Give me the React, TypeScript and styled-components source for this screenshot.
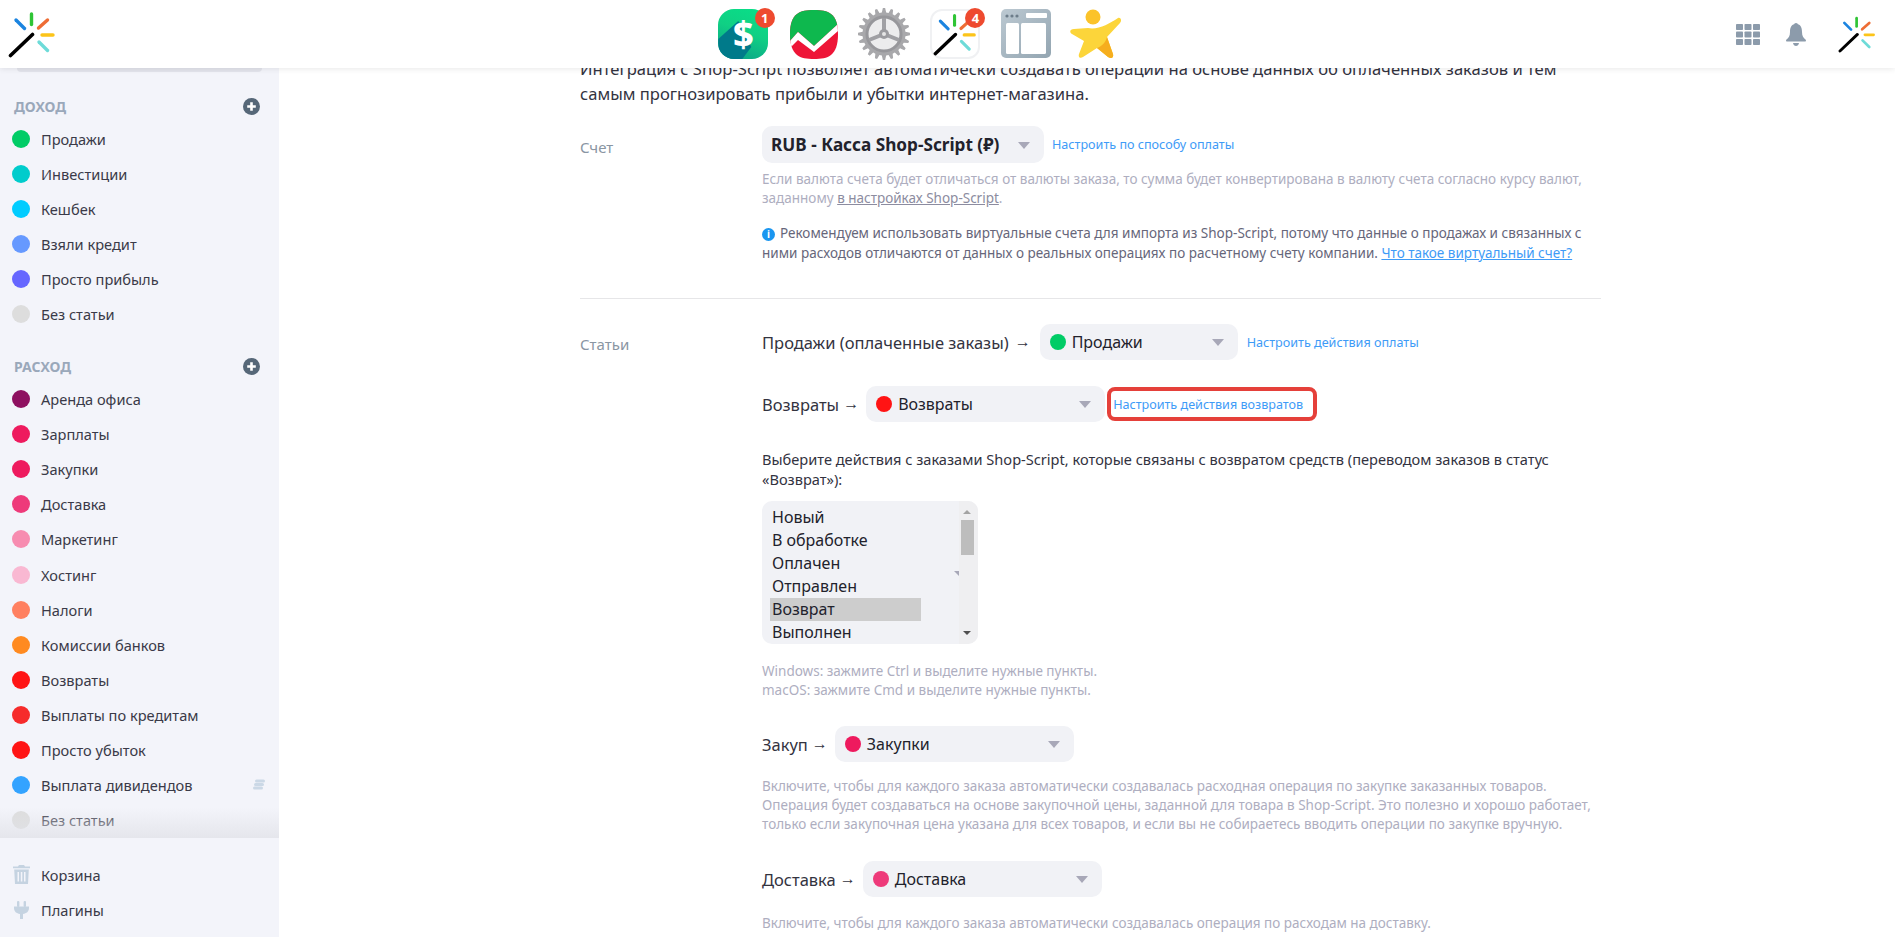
import React from 'react';
import styled, { createGlobalStyle } from 'styled-components';

const FONT = `'Noto Sans', 'Open Sans', sans-serif`;

const GlobalStyle = createGlobalStyle`
  html, body {
    margin: 0;
    height: 100%;
    overflow: hidden;
    background: #fff;
    font-family: ${FONT};
    color: #2e2e3a;
  }
  * { box-sizing: border-box; }
`;

const Page = styled.div`
  width: 1895px;
  height: 937px;
  display: flex;
  flex-direction: column;
  overflow: hidden;
`;

const Header = styled.header`
  position: relative;
  z-index: 5;
  flex: none;
  height: 68px;
  display: flex;
  align-items: center;
  padding: 0 19px 0 8px;
  background: #fff;
  box-shadow: 0 1px 6px rgba(0, 0, 0, 0.09);
`;

const AppDock = styled.nav`
  display: flex;
  align-items: center;
  margin-left: 652px;
`;

const AppCell = styled.div`
  position: relative;
  width: 70.6px;
  height: 52px;
  display: flex;
  align-items: center;
  justify-content: center;
`;

const Badge = styled.span<{ $right: number }>`
  position: absolute;
  top: 0;
  right: ${(p) => p.$right}px;
  width: 20px;
  height: 20px;
  border-radius: 50%;
  background: #ee4a2f;
  color: #fff;
  font-size: 13px;
  font-weight: 700;
  line-height: 20px;
  text-align: center;
`;

const DollarIcon = styled.div`
  position: relative;
  width: 50px;
  height: 50px;
  display: flex;
  align-items: center;
  justify-content: center;
  border-radius: 16px;
  overflow: hidden;
  background: linear-gradient(200deg, #08e088 0%, #10d084 45%, #0a9c88 100%);

  &::before {
    content: '';
    position: absolute;
    inset: 0;
    background: #007a8a;
    clip-path: polygon(0 60%, 40% 24%, 66% 76%, 48% 100%, 0 100%);
  }
`;

const DollarSign = styled.span`
  position: relative;
  color: #fff;
  font-size: 36px;
  font-weight: 800;
  line-height: 1;
`;

const WandTile = styled.div`
  width: 50px;
  height: 50px;
  border-radius: 12px;
  border: 2px solid #f0f1f3;
  background: #fff;
  display: flex;
  align-items: center;
  justify-content: center;
`;

const HeaderTools = styled.div`
  margin-left: auto;
  display: flex;
  align-items: center;
`;

const ToolSlot = styled.span<{ $gap: number }>`
  display: flex;
  margin-right: ${(p) => p.$gap}px;
`;

const Body = styled.div`
  flex: 1;
  min-height: 0;
  display: flex;
`;

const Sidebar = styled.aside`
  flex: none;
  width: 279px;
  display: flex;
  flex-direction: column;
  background: #f3f4fa;
`;

const SidebarScroll = styled.div`
  position: relative;
  height: 770px;
  overflow: hidden;

  &::after {
    content: '';
    position: absolute;
    left: 0;
    right: 0;
    bottom: 0;
    height: 30px;
    background: linear-gradient(rgba(225, 226, 232, 0), rgba(225, 226, 232, 0.8));
  }
`;

const SearchStub = styled.div`
  height: 4px;
  margin: 0 17px;
  border-radius: 0 0 10px 10px;
  background: #e3e4ec;
`;

const GroupTitle = styled.div`
  height: 24px;
  margin-bottom: 3px;
  display: flex;
  align-items: center;
  justify-content: space-between;
  padding: 0 19px 0 14px;
  font-size: 14px;
  font-weight: 700;
  color: #9aa8ba;
  text-transform: uppercase;
`;

const Group = styled.section<{ $top: number }>`
  margin-top: ${(p) => p.$top}px;
`;

const Row = styled.div`
  position: relative;
  height: 35.1px;
  display: flex;
  align-items: center;
  gap: 11px;
  padding-left: 12px;
  font-size: 14.6px;
  color: #3a3a48;
`;

const Dot = styled.span<{ $color: string; $size?: number }>`
  flex: none;
  width: ${(p) => p.$size ?? 18}px;
  height: ${(p) => p.$size ?? 18}px;
  border-radius: 50%;
  background: ${(p) => p.$color};
`;

const RowIcon = styled.span`
  flex: none;
  width: 18px;
  display: flex;
  justify-content: center;
`;

const CoinsMark = styled.svg`
  margin-left: auto;
  margin-right: 14px;
`;

const SidebarFooter = styled.div`
  padding-top: 19px;
`;

const Main = styled.main`
  flex: 1;
  min-width: 0;
  overflow: hidden;
  padding-left: 301px;
`;

const Content = styled.div`
  width: 1021px;
  margin-top: -12px;
`;

const Intro = styled.p`
  margin: 0;
  font-size: 16.6px;
  line-height: 25px;
  color: #33333f;
  white-space: nowrap;
`;

const FieldRow = styled.div<{ $top: number }>`
  display: grid;
  grid-template-columns: 182px 1fr;
  margin-top: ${(p) => p.$top}px;
`;

const FieldLabel = styled.div<{ $top: number }>`
  padding-top: ${(p) => p.$top}px;
  font-size: 15px;
  line-height: 20px;
  color: #8a96a3;
`;

const Divider = styled.hr`
  margin: 0;
  border: 0;
  border-top: 1px solid #e6e6e8;
`;

const Line = styled.div<{ $top?: number; $gap?: number }>`
  display: flex;
  align-items: center;
  gap: ${(p) => p.$gap ?? 7}px;
  margin-top: ${(p) => p.$top ?? 0}px;
  font-size: 16.5px;
  color: #33333f;
`;

const Arrow = styled.span`
  margin-left: -3px;
  font-family: 'Liberation Sans', sans-serif;
  font-size: 16px;
`;

const Select = styled.div<{ $width: number; $bold?: boolean; $height?: number }>`
  flex: none;
  position: relative;
  width: ${(p) => p.$width}px;
  height: ${(p) => p.$height ?? 36}px;
  display: flex;
  align-items: center;
  gap: 6px;
  padding-left: ${(p) => (p.$bold ? 9 : 10)}px;
  border-radius: 10px;
  background: #f1f2f6;
  font-size: ${(p) => (p.$bold ? 17.2 : 16)}px;
  font-weight: ${(p) => (p.$bold ? 700 : 400)};
  color: #22222c;
  white-space: nowrap;

  &::after {
    content: '';
    position: absolute;
    right: 14px;
    top: 50%;
    margin-top: -3px;
    border-style: solid;
    border-width: 7px 6px 0;
    border-color: #a8a8b8 transparent transparent;
  }
`;

const ActionLink = styled.a`
  font-size: 12.6px;
  color: #3e9bf7;
  white-space: nowrap;
`;

const BoxedLink = styled(ActionLink)`
  height: 34px;
  margin-left: -5px;
  padding: 0 10px 0 2px;
  display: flex;
  align-items: center;
  border: 4px solid #e5403a;
  border-radius: 8px;
`;

const Hint = styled.p<{ $top: number }>`
  margin: ${(p) => p.$top}px 0 0;
  font-size: 13.5px;
  line-height: 19px;
  color: #aeaebf;
  white-space: nowrap;

  a {
    color: #8c8ca0;
    text-decoration: underline;
  }
`;

const Notice = styled.p`
  margin: 15px 0 0;
  font-size: 13.5px;
  line-height: 20px;
  color: #66667a;
  white-space: nowrap;

  a {
    color: #3e9bf7;
    text-decoration: underline;
  }
`;

const InfoBadge = styled.span`
  display: inline-block;
  width: 13px;
  height: 13px;
  margin-right: 5px;
  border-radius: 50%;
  background: #1a96f0;
  color: #fff;
  font-size: 10px;
  font-weight: 700;
  line-height: 13px;
  text-align: center;
`;

const Lead = styled.p`
  margin: 27px 0 0;
  font-size: 14.6px;
  line-height: 20px;
  color: #33333f;
  white-space: nowrap;
`;

const ListBox = styled.div`
  position: relative;
  width: 216px;
  height: 143px;
  margin-top: 12px;
  padding: 5px 0 0 8px;
  border-radius: 10px;
  background: #f1f2f6;
  overflow: hidden;

  &::before {
    content: '';
    position: absolute;
    left: 192px;
    top: 70px;
    border-top: 5px solid #a8a8b8;
    border-left: 5px solid transparent;
  }
`;

const ListOption = styled.div<{ $selected?: boolean }>`
  width: 151px;
  height: 23px;
  padding-left: 2px;
  font-size: 16px;
  line-height: 23px;
  color: #22222c;
  background: ${(p) => (p.$selected ? '#cdcdcd' : 'transparent')};
`;

const ListScrollbar = styled.div`
  position: absolute;
  top: 0;
  right: 0;
  bottom: 0;
  width: 19px;
  background: #efeff1;

  &::before,
  &::after {
    content: '';
    position: absolute;
    left: 4px;
    border-style: solid;
    border-color: transparent;
  }

  &::before {
    top: 9px;
    border-width: 0 4px 4px;
    border-bottom-color: #a3a3a3;
  }

  &::after {
    bottom: 9px;
    border-width: 4px 4px 0;
    border-top-color: #505050;
  }
`;

const ListThumb = styled.div`
  position: absolute;
  top: 19px;
  left: 2px;
  width: 13px;
  height: 35px;
  background: #bdbdbd;
`;

const Wand: React.FC<{ size: number }> = ({ size }) => (
  <svg width={size} height={size} viewBox="8 9 48 48" fill="none" strokeLinecap="round">
    <path d="M10.5 54.5 32.5 33.5" stroke="#000" strokeWidth="3.6" />
    <path d="M16 19 24.5 27.5" stroke="#1b84e0" strokeWidth="3.4" />
    <path d="M31.5 13V23.5" stroke="#2fc435" strokeWidth="3.4" />
    <path d="M38.5 27 47.5 19" stroke="#ee6d35" strokeWidth="3.4" />
    <path d="M42 34H53" stroke="#fcc419" strokeWidth="3.4" />
    <path d="M39 41 47.5 49.5" stroke="#6ddbd8" strokeWidth="3.4" />
  </svg>
);

// gear outline: 20 teeth around the wheel
const gearPath = (() => {
  const teeth = 20;
  const points: string[] = [];
  for (let i = 0; i < teeth; i++) {
    const step = (Math.PI * 2) / teeth;
    const a = i * step;
    const corners: [number, number][] = [
      [-0.32, 21.5],
      [-0.14, 26],
      [0.14, 26],
      [0.32, 21.5],
    ];
    for (const [off, r] of corners) {
      const angle = a + off * step;
      points.push(`${(26 + r * Math.cos(angle)).toFixed(2)} ${(26 + r * Math.sin(angle)).toFixed(2)}`);
    }
  }
  return `M${points.join('L')}Z`;
})();

const TrendIcon = () => (
  <svg width="48" height="49" viewBox="0 0 48 49">
    <defs>
      <clipPath id="trendClip">
        <path d="M24 0C38 0 48 3 48 24C48 46 38 49 24 49C10 49 0 46 0 24C0 3 10 0 24 0Z" />
      </clipPath>
    </defs>
    <g clipPath="url(#trendClip)">
      <rect width="48" height="49" fill="#ee1537" />
      <path d="M0 0H48V14L24 36 8 22 0 31Z" fill="#0eb84e" />
      <path d="M0 31 8 22 24 36 48 14V21L24 42 8 30 0 38Z" fill="#fff" />
    </g>
  </svg>
);

const GearIcon = () => (
  <svg width="52" height="52" viewBox="0 0 52 52">
    <path d={gearPath} fill="#a8a8ab" />
    <circle cx="26" cy="26" r="17" fill="#ececed" />
    <circle cx="26" cy="26" r="17" fill="none" stroke="#97979b" strokeWidth="3" />
    <path d="M26 26V10M26 26 11 32M26 26 41 32" stroke="#a0a0a4" strokeWidth="4" />
    <circle cx="26" cy="26" r="5" fill="#9b9b9f" />
    <circle cx="26" cy="26" r="2" fill="#e6e6e6" />
  </svg>
);

const WindowIcon = () => (
  <svg width="50" height="50" viewBox="0 0 50 50">
    <defs>
      <linearGradient id="windowShade" x1="0" y1="0" x2="1" y2="1">
        <stop offset="0" stopColor="#bcc9d2" />
        <stop offset="1" stopColor="#93a5b1" />
      </linearGradient>
    </defs>
    <rect width="50" height="49" rx="5" fill="url(#windowShade)" />
    <circle cx="6" cy="7" r="1.6" fill="#6d7d8a" />
    <circle cx="11" cy="7" r="1.6" fill="#6d7d8a" />
    <circle cx="16" cy="7" r="1.6" fill="#6d7d8a" />
    <rect x="25" y="4" width="21" height="5" rx="1" fill="#fff" />
    <rect x="5" y="14" width="13" height="31" rx="1.5" fill="#fff" />
    <rect x="20" y="14" width="25" height="31" rx="1.5" fill="#fff" />
  </svg>
);

const StarIcon = () => (
  <svg width="52" height="52" viewBox="0 0 52 52">
    <circle cx="23" cy="9" r="7.5" fill="#fbc32a" />
    <path d="M48 10C51 9 52 13 50 15L37 29 43 46C44 50 41 51 38 49L27 40 13 49C10 51 8 49 9 46L14 33 2 26C-1 24 0 21 4 21L18 20C28 22 39 16 48 10Z" fill="#fcd53a" />
    <path d="M37 29 43 46C44 50 41 51 38 49L27 40C32 38 36 34 37 29Z" fill="#f6ae1e" />
  </svg>
);

const GridIcon = () => (
  <svg width="24" height="21" viewBox="0 0 24 21" fill="#8c9bab">
    {[0, 1, 2].flatMap((r) =>
      [0, 1, 2].map((c) => <rect key={`${r}-${c}`} x={c * 8.5} y={r * 7.5} width="7" height="6" rx="0.8" />),
    )}
  </svg>
);

const BellIcon = () => (
  <svg width="20" height="23" viewBox="0 0 20 23" fill="#8c9bab">
    <circle cx="10" cy="2" r="2" />
    <path d="M10 1C14.5 1 16 4.5 16 9C16 13 17.5 15 19.5 16.5C20.3 17.2 20 18.5 19 18.5H1C0 18.5 -0.3 17.2 0.5 16.5C2.5 15 4 13 4 9C4 4.5 5.5 1 10 1Z" />
    <path d="M7 20H13C12.7 22 11.4 23 10 23C8.6 23 7.3 22 7 20Z" />
  </svg>
);

const TrashIcon = () => (
  <svg width="17" height="19" viewBox="0 0 17 19" fill="#c5d3e1">
    <path d="M6 0H11L12 1.5H17V3.2H0V1.5H5Z" />
    <path d="M1.2 4.5H15.8L15 19H2ZM4.5 7V16.5H6V7ZM7.8 7V16.5H9.3V7ZM11 7V16.5H12.5V7Z" fillRule="evenodd" />
  </svg>
);

const PlugIcon = () => (
  <svg width="15" height="18" viewBox="0 0 15 18" fill="#c5d3e1">
    <rect x="3" y="0" width="2.4" height="6" rx="1" />
    <rect x="9.6" y="0" width="2.4" height="6" rx="1" />
    <path d="M0 5.5H15V7C15 10.5 12.5 12.5 9 13V18H6V13C2.5 12.5 0 10.5 0 7Z" />
  </svg>
);

const incomeRows = [
  ['Продажи', '#00cc66'],
  ['Инвестиции', '#00cccc'],
  ['Кешбек', '#00ccff'],
  ['Взяли кредит', '#6699ff'],
  ['Просто прибыль', '#6666ff'],
  ['Без статьи', '#dddddd'],
];

const expenseRows = [
  ['Аренда офиса', '#8e1060'],
  ['Зарплаты', '#ee1a5e'],
  ['Закупки', '#ee1a5e'],
  ['Доставка', '#ee3a7a'],
  ['Маркетинг', '#f78cb0'],
  ['Хостинг', '#f9b8d2'],
  ['Налоги', '#ff8060'],
  ['Комиссии банков', '#ff8a20'],
  ['Возвраты', '#ff1414'],
  ['Выплаты по кредитам', '#f62b2b'],
  ['Просто убыток', '#ff1414'],
  ['Выплата дивидендов', '#33a3ff'],
  ['Без статьи', '#dddddd'],
];

const listOptions = ['Новый', 'В обработке', 'Оплачен', 'Отправлен', 'Возврат', 'Выполнен'];

const PlusCircle = () => (
  <svg width="17" height="17" viewBox="0 0 17 17">
    <circle cx="8.5" cy="8.5" r="8.5" fill="#566778" />
    <path d="M8.5 4.2V12.8M4.2 8.5H12.8" stroke="#fff" strokeWidth="2.6" />
  </svg>
);

const App: React.FC = () => (
  <Page>
    <GlobalStyle />
    <Header>
      <Wand size={48} />
      <AppDock>
        <AppCell>
          <DollarIcon>
            <DollarSign>$</DollarSign>
          </DollarIcon>
          <Badge $right={4}>1</Badge>
        </AppCell>
        <AppCell>
          <TrendIcon />
        </AppCell>
        <AppCell>
          <GearIcon />
        </AppCell>
        <AppCell>
          <WandTile>
            <Wand size={44} />
          </WandTile>
          <Badge $right={5}>4</Badge>
        </AppCell>
        <AppCell>
          <WindowIcon />
        </AppCell>
        <AppCell>
          <StarIcon />
        </AppCell>
      </AppDock>
      <HeaderTools>
        <ToolSlot $gap={26}>
          <GridIcon />
        </ToolSlot>
        <ToolSlot $gap={32}>
          <BellIcon />
        </ToolSlot>
        <Wand size={38} />
      </HeaderTools>
    </Header>

    <Body>
      <Sidebar>
        <SidebarScroll>
          <SearchStub />
          <Group $top={22}>
            <GroupTitle>
              Доход
              <PlusCircle />
            </GroupTitle>
            {incomeRows.map(([name, color]) => (
              <Row key={name}>
                <Dot $color={color} />
                {name}
              </Row>
            ))}
          </Group>
          <Group $top={23}>
            <GroupTitle>
              Расход
              <PlusCircle />
            </GroupTitle>
            {expenseRows.map(([name, color]) => (
              <Row key={name}>
                <Dot $color={color} />
                {name}
                {name === 'Выплата дивидендов' && (
                  <CoinsMark width="12" height="12" viewBox="0 0 12 12" fill="#cbd8e6">
                    <rect x="2" y="0.5" width="10" height="3" rx="1.5" />
                    <rect x="1" y="4" width="10" height="3" rx="1.5" />
                    <rect x="0" y="7.5" width="10" height="3" rx="1.5" />
                  </CoinsMark>
                )}
              </Row>
            ))}
          </Group>
        </SidebarScroll>
        <SidebarFooter>
          <Row>
            <RowIcon>
              <TrashIcon />
            </RowIcon>
            Корзина
          </Row>
          <Row>
            <RowIcon>
              <PlugIcon />
            </RowIcon>
            Плагины
          </Row>
        </SidebarFooter>
      </Sidebar>

      <Main>
        <Content>
          <Intro>
            Интеграция с Shop-Script позволяет автоматически создавать операции на основе данных об оплаченных заказов и тем
            <br />
            самым прогнозировать прибыли и убытки интернет-магазина.
          </Intro>

          <FieldRow $top={20}>
            <FieldLabel $top={11}>Счет</FieldLabel>
            <div>
              <Line $gap={8}>
                <Select $width={282} $bold $height={37}>
                  RUB - Касса Shop-Script (₽)
                </Select>
                <ActionLink>Настроить по способу оплаты</ActionLink>
              </Line>
              <Hint $top={7}>
                Если валюта счета будет отличаться от валюты заказа, то сумма будет конвертирована в валюту счета согласно курсу валют,
                <br />
                заданному <a>в настройках Shop-Script</a>.
              </Hint>
              <Notice>
                <InfoBadge>i</InfoBadge>
                Рекомендуем использовать виртуальные счета для импорта из Shop-Script, потому что данные о продажах и связанных с
                <br />
                ними расходов отличаются от данных о реальных операциях по расчетному счету компании. <a>Что такое виртуальный счет?</a>
              </Notice>
            </div>
          </FieldRow>

          <FieldRow $top={35}>
            <Divider />
            <Divider />
          </FieldRow>

          <FieldRow $top={25}>
            <FieldLabel $top={10}>Статьи</FieldLabel>
            <div>
              <Line $gap={9}>
                Продажи (оплаченные заказы) <Arrow>→</Arrow>
                <Select $width={198}>
                  <Dot $color="#00cc66" $size={16} />
                  Продажи
                </Select>
                <ActionLink>Настроить действия оплаты</ActionLink>
              </Line>
              <Line $top={26}>
                Возвраты <Arrow>→</Arrow>
                <Select $width={239}>
                  <Dot $color="#ff1414" $size={16} />
                  Возвраты
                </Select>
                <BoxedLink>Настроить действия возвратов</BoxedLink>
              </Line>
              <Lead>
                Выберите действия с заказами Shop-Script, которые связаны с возвратом средств (переводом заказов в статус
                <br />
                «Возврат»):
              </Lead>
              <ListBox>
                {listOptions.map((option) => (
                  <ListOption key={option} $selected={option === 'Возврат'}>
                    {option}
                  </ListOption>
                ))}
                <ListScrollbar>
                  <ListThumb />
                </ListScrollbar>
              </ListBox>
              <Hint $top={18}>
                Windows: зажмите Ctrl и выделите нужные пункты.
                <br />
                macOS: зажмите Cmd и выделите нужные пункты.
              </Hint>
              <Line $top={26}>
                Закуп <Arrow>→</Arrow>
                <Select $width={239}>
                  <Dot $color="#ee1a5e" $size={16} />
                  Закупки
                </Select>
              </Line>
              <Hint $top={15}>
                Включите, чтобы для каждого заказа автоматически создавалась расходная операция по закупке заказанных товаров.
                <br />
                Операция будет создаваться на основе закупочной цены, заданной для товара в Shop-Script. Это полезно и хорошо работает,
                <br />
                только если закупочная цена указана для всех товаров, и если вы не собираетесь вводить операции по закупке вручную.
              </Hint>
              <Line $top={27}>
                Доставка <Arrow>→</Arrow>
                <Select $width={239}>
                  <Dot $color="#ee3a7a" $size={16} />
                  Доставка
                </Select>
              </Line>
              <Hint $top={17}>
                Включите, чтобы для каждого заказа автоматически создавалась операция по расходам на доставку.
              </Hint>
            </div>
          </FieldRow>
        </Content>
      </Main>
    </Body>
  </Page>
);

export default App;
